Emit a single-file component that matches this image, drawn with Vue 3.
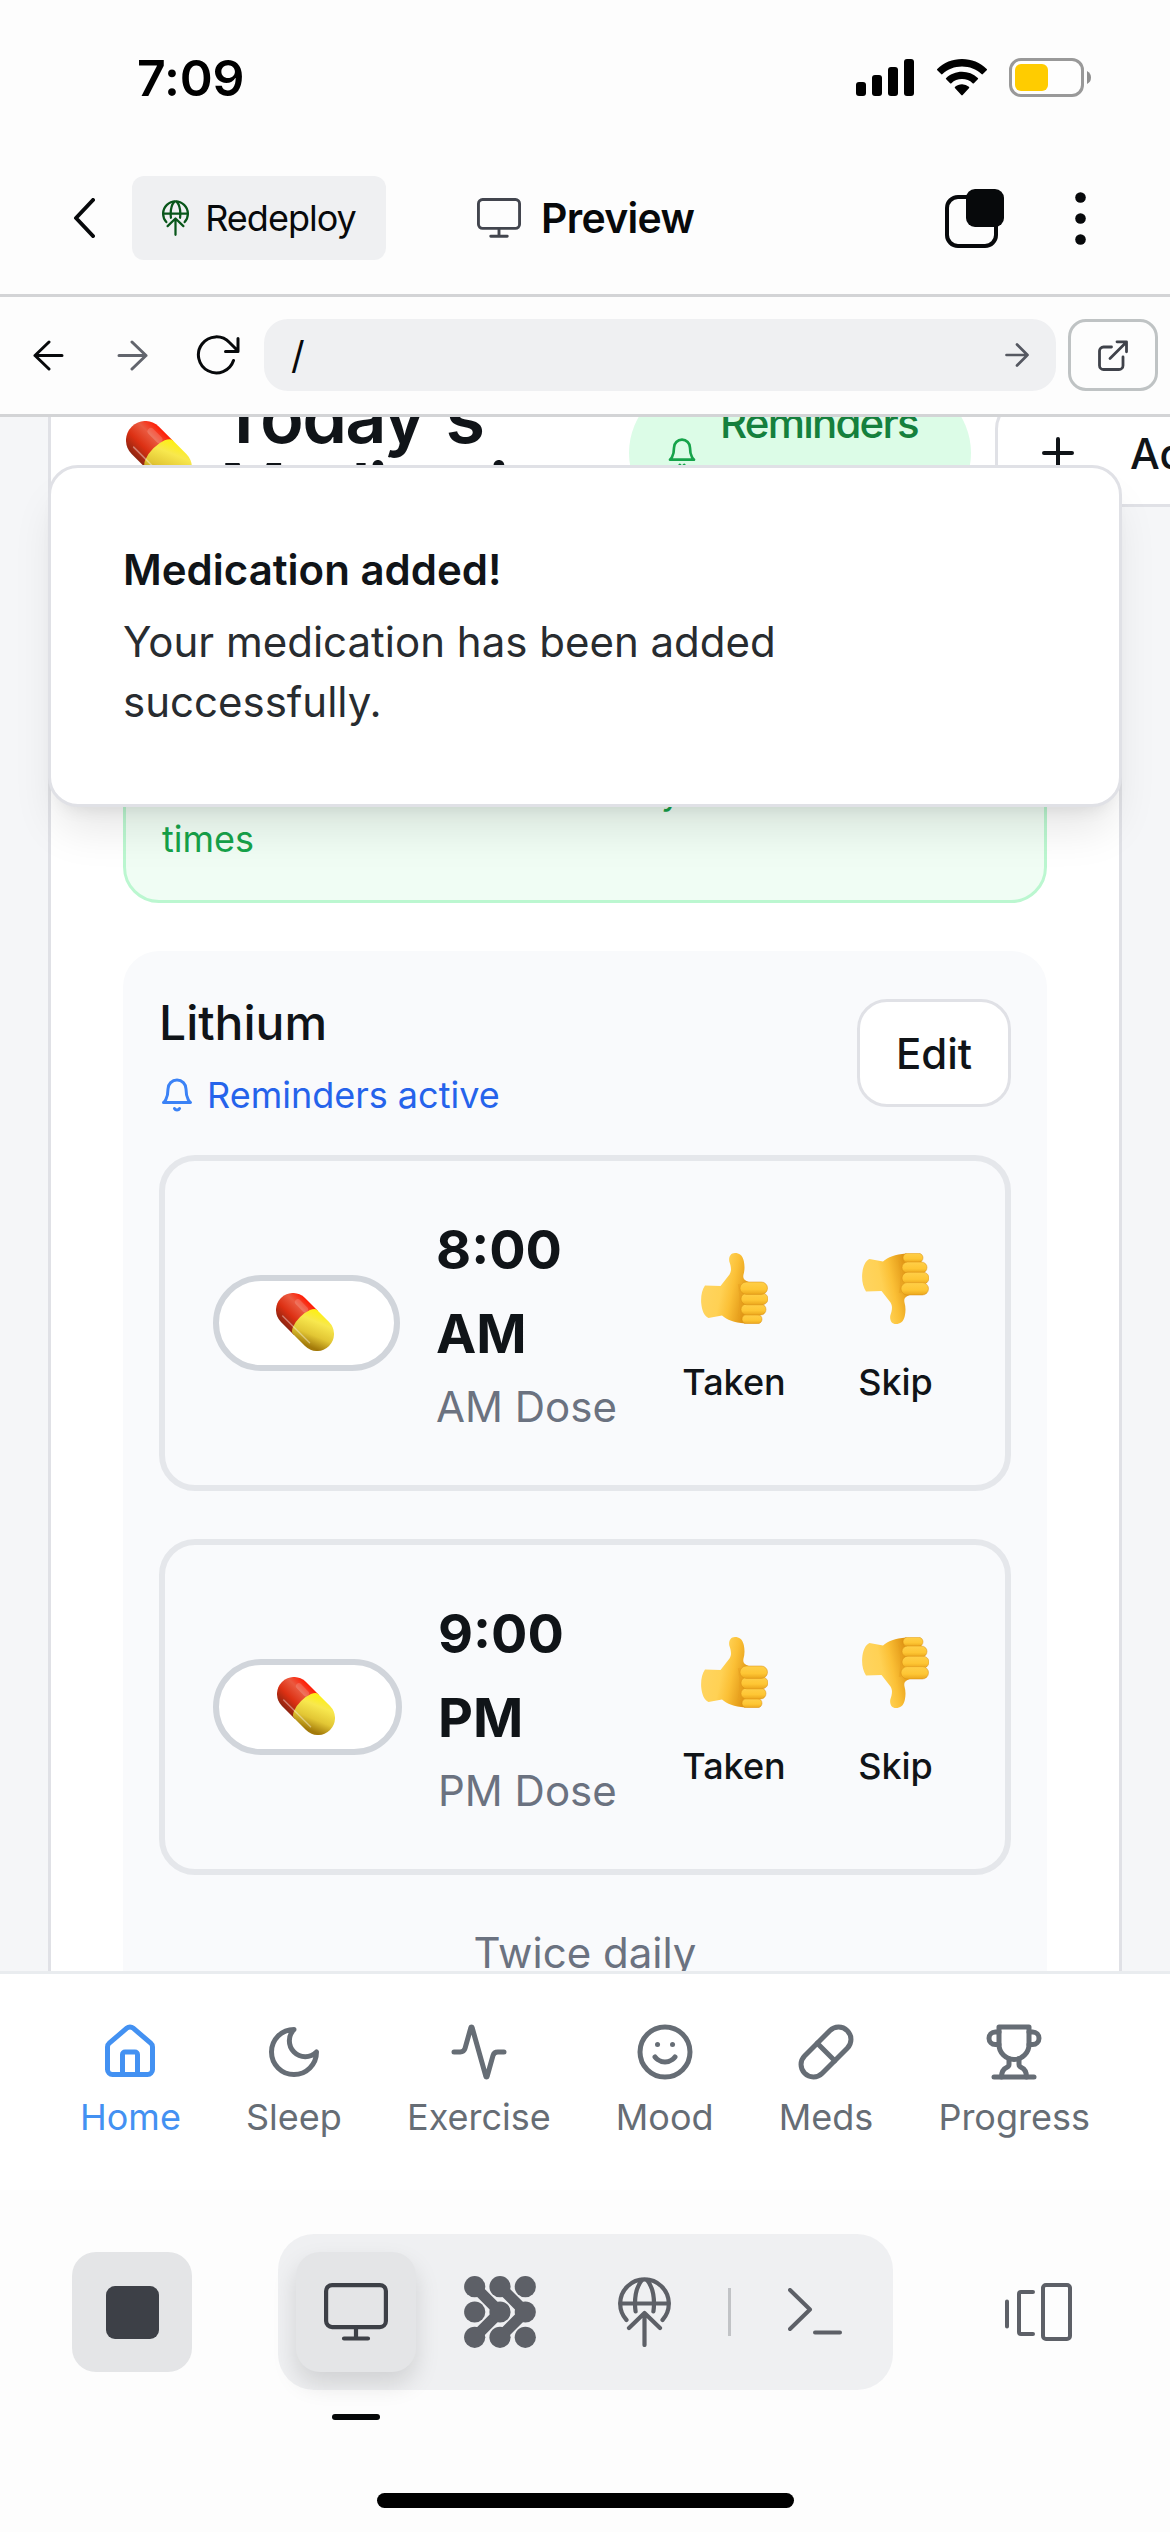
<script setup>
import { h } from 'vue'

const doses = [
  { time: '8:00', half: 'AM', label: 'AM Dose', pillWidth: 187 },
  { time: '9:00', half: 'PM', label: 'PM Dose', pillWidth: 189 }
]

const tabs = [
  {
    name: 'Home',
    active: true,
    paths: [
      'M15 21v-8a1 1 0 0 0-1-1h-4a1 1 0 0 0-1 1v8',
      'M3 10a2 2 0 0 1 .709-1.528l7-5.999a2 2 0 0 1 2.582 0l7 5.999A2 2 0 0 1 21 10v9a2 2 0 0 1-2 2H5a2 2 0 0 1-2-2z'
    ]
  },
  { name: 'Sleep', paths: ['M12 3a6 6 0 0 0 9 9 9 9 0 1 1-9-9Z'] },
  {
    name: 'Exercise',
    paths: [
      'M22 12h-2.48a2 2 0 0 0-1.93 1.46l-2.35 8.36a.25.25 0 0 1-.48 0L9.24 2.18a.25.25 0 0 0-.48 0l-2.35 8.36A2 2 0 0 1 4.49 12H2'
    ]
  },
  {
    name: 'Mood',
    paths: ['M12 2a10 10 0 1 0 0 20 10 10 0 1 0 0-20Z', 'M8 14s1.5 2 4 2 4-2 4-2', 'M9 9h.01', 'M15 9h.01']
  },
  {
    name: 'Meds',
    paths: ['m10.5 20.5 10-10a4.95 4.95 0 1 0-7-7l-10 10a4.95 4.95 0 1 0 7 7Z', 'm8.5 8.5 7 7']
  },
  {
    name: 'Progress',
    paths: [
      'M6 9H4.5a2.5 2.5 0 0 1 0-5H6',
      'M18 9h1.5a2.5 2.5 0 0 0 0-5H18',
      'M4 22h16',
      'M10 14.66V17c0 .55-.47.98-.97 1.21C7.85 18.75 7 20.24 7 22',
      'M14 14.66V17c0 .55.47.98.97 1.21C16.15 18.75 17 20.24 17 22',
      'M18 2H6v7a6 6 0 0 0 12 0V2Z'
    ]
  }
]

const Bell = () =>
  h('svg', { viewBox: '0 0 24 24', fill: 'none', stroke: 'currentColor', 'stroke-width': 2, 'stroke-linecap': 'round', 'stroke-linejoin': 'round' }, [
    h('path', { d: 'M6 8a6 6 0 0 1 12 0c0 7 3 9 3 9H3s3-2 3-9' }),
    h('path', { d: 'M10.3 21a1.94 1.94 0 0 0 3.4 0' })
  ])

const Globe = (props) =>
  h('svg', { viewBox: '0 0 53 70', fill: 'none', stroke: 'currentColor', 'stroke-width': props.weight, 'stroke-linecap': 'round', 'stroke-linejoin': 'round' }, [
    h('path', { d: 'M8.5 43A24.3 24.3 0 1 1 44.5 43' }),
    h('path', { d: 'M2.5 26.5h48M24 3C19 9 17 17 17 26.5q0 4 .6 8M29 3c5 6 7 14 7 23.5q0 4-.6 8' }),
    h('path', { d: 'M11 51 26.5 36 42 51M26.5 37v31' })
  ])
Globe.props = ['weight']

const Monitor = () =>
  h('svg', { viewBox: '0 0 64 58', fill: 'none', stroke: 'currentColor', 'stroke-width': 4.2, 'stroke-linecap': 'round' }, [
    h('rect', { x: 2.1, y: 2.1, width: 59.8, height: 42, rx: 6 }),
    h('path', { d: 'M32 45v10M20 55.5h24' })
  ])

const Capsule = () =>
  h('svg', { viewBox: '0 0 58 58' }, [
    h('g', { transform: 'rotate(45 29 29)' }, [
      h('path', { d: 'M30 12H12a17 17 0 0 0 0 34h18Z', fill: 'url(#capRed)' }),
      h('path', { d: 'M29 12h17a17 17 0 0 1 0 34H29a7 17 0 0 1 0-34Z', fill: 'url(#capYellow)' }),
      h('path', { d: 'M9 40.5h38', stroke: '#fff', 'stroke-opacity': 0.4, 'stroke-width': 1.4, 'stroke-linecap': 'round', fill: 'none' }),
      h('path', { d: 'M10 20h10', stroke: '#fff', 'stroke-opacity': 0.16, 'stroke-width': 6, 'stroke-linecap': 'round', fill: 'none' })
    ])
  ])

const Thumb = (props) =>
  h('svg', { viewBox: '0 0 67 71' }, [
    h('g', { transform: props.down ? 'translate(0 71) scale(1 -1)' : undefined }, [
      h('path', {
        d: 'M4 32.5C1 37-.3 43 .2 50 .8 57 3 63 7.500 65L21 62.500C26 67 33 69.500 44 70.500L50 58V30L45.500 28C42.500 26.500 42 25 42.400 22 43.800 17 43.800 13 42.800 8 41.500 2 38 0 34 0 29.500 0 27.500 4 28.300 8.500 30.500 15 30.500 18 28.500 21.500L19.500 33Z',
        fill: 'url(#handBase)'
      }),
      h('path', { d: 'M38 31q3 17 0 32', stroke: '#e8a020', 'stroke-width': 2.4, 'stroke-opacity': 0.5, fill: 'none' }),
      ...[
        [41, 61.5, 20, 9.3],
        [40, 51, 25, 11],
        [40, 40, 27, 11.8],
        [39, 29, 27.5, 12.4]
      ].map(([x, y, width, height]) =>
        h('rect', { x, y, width, height, rx: height / 2, fill: props.down ? 'url(#fingerDown)' : 'url(#finger)', stroke: '#d88d12', 'stroke-width': 0.7, 'stroke-opacity': 0.7 })
      )
    ])
  ])
Thumb.props = { down: Boolean }
</script>

<template>
  <div class="screen">
    <svg class="defs" width="0" height="0">
      <defs>
        <linearGradient id="capRed" x1="0" y1="0" x2="0" y2="1">
          <stop offset="0" stop-color="#ff1c05" />
          <stop offset=".3" stop-color="#ea5a40" />
          <stop offset=".65" stop-color="#dc3013" />
          <stop offset="1" stop-color="#8e2410" />
        </linearGradient>
        <linearGradient id="capYellow" x1="0" y1="0" x2=".5" y2="1">
          <stop offset="0" stop-color="#fff200" />
          <stop offset=".35" stop-color="#f8e84e" />
          <stop offset=".7" stop-color="#e2c634" />
          <stop offset="1" stop-color="#a37a0a" />
        </linearGradient>
        <linearGradient id="handBase" x1="0" y1=".35" x2="1" y2=".65">
          <stop offset="0" stop-color="#ffd562" />
          <stop offset=".42" stop-color="#ffd154" />
          <stop offset=".62" stop-color="#fbc036" />
          <stop offset="1" stop-color="#d98a0c" />
        </linearGradient>
        <linearGradient id="finger" x1="0" y1="0" x2="0" y2="1">
          <stop offset="0" stop-color="#ffcf48" />
          <stop offset=".6" stop-color="#fec634" />
          <stop offset="1" stop-color="#eba61d" />
        </linearGradient>
        <linearGradient id="fingerDown" x1="0" y1="1" x2="0" y2="0">
          <stop offset="0" stop-color="#ffcf48" />
          <stop offset=".6" stop-color="#fec634" />
          <stop offset="1" stop-color="#eba61d" />
        </linearGradient>
      </defs>
    </svg>

    <header class="status">
      <span class="clock">7:09</span>
      <div class="status-icons">
        <svg class="signal" viewBox="0 0 58 37">
          <rect x="0" y="23" width="10" height="14" rx="3" />
          <rect x="16" y="16" width="10" height="21" rx="3" />
          <rect x="32" y="8" width="10" height="29" rx="3" />
          <rect x="48" y="0" width="10" height="37" rx="3" />
        </svg>
        <svg class="wifi" viewBox="0 0 50 37">
          <path d="M25 0C15.500 0 6.600 3.700.3 9.900a.9.9 0 0 0 0 1.300l3.800 3.900a1 1 0 0 0 1.400 0C10.700 10.200 17.600 7.500 25 7.500s14.300 2.700 19.500 7.600a1 1 0 0 0 1.400 0l3.800-3.900a.9.9 0 0 0 0-1.300C43.400 3.700 34.500 0 25 0Z" />
          <path d="M25 12.700c-6 0-11.600 2.300-15.800 6.200a.9.9 0 0 0 0 1.400l3.900 3.900a1 1 0 0 0 1.300 0c2.800-2.600 6.500-4.100 10.600-4.100s7.800 1.500 10.600 4.100a1 1 0 0 0 1.300 0l3.900-3.900a.9.9 0 0 0 0-1.400A23.200 23.200 0 0 0 25 12.700Z" />
          <path d="M25 25.300c-2.600 0-5 .9-6.900 2.500a.9.9 0 0 0 0 1.400l6.200 6.900a1 1 0 0 0 1.400 0l6.200-6.900a.9.9 0 0 0 0-1.400 10.600 10.600 0 0 0-6.900-2.500Z" />
        </svg>
        <svg class="battery" viewBox="0 0 82 39">
          <rect x="1.5" y="1.500" width="72" height="36" rx="10.500" fill="#fefefe" stroke="#999" stroke-width="3" />
          <rect x="6" y="6" width="33" height="27" rx="6" fill="#ffcc00" />
          <path d="M78 13v13q4-2 4-6.500T78 13Z" fill="#8f8f8f" />
        </svg>
      </div>
    </header>

    <div class="toolbar">
      <svg class="back" viewBox="0 0 22 40"><path d="M20 2 3 20l17 18" /></svg>
      <button class="redeploy"><Globe class="redeploy-icon" :weight="4.4" />Redeploy</button>
      <div class="title"><Monitor class="title-icon" />Preview</div>
      <svg class="tabs-icon" viewBox="0 0 59 59">
        <rect x="2" y="8" width="49" height="49" rx="11" fill="none" stroke="#07090b" stroke-width="4" />
        <rect x="21" y="0" width="38" height="38" rx="9" fill="#07090b" />
      </svg>
      <svg class="dots" viewBox="0 0 11 53">
        <circle cx="5.500" cy="5.500" r="5.300" /><circle cx="5.500" cy="26.500" r="5.300" /><circle cx="5.500" cy="47.500" r="5.300" />
      </svg>
    </div>

    <div class="browser">
      <svg class="nav-arrow" viewBox="0 0 31 31"><path d="M29 15.500H2M16 2 2 15.500 16 29" /></svg>
      <svg class="nav-arrow forward" viewBox="0 0 31 31"><path d="M2 15.500h27M15 2l14 13.500L15 29" /></svg>
      <svg class="reload" viewBox="0 0 44 40">
        <path d="M37.500 25.500A18 18 0 1 1 33.500 7.500L42 16M42 3.500V16.500H29.500" />
      </svg>
      <div class="address">
        <span>/</span>
        <svg viewBox="0 0 24 24"><path d="M1.500 12h21M12 1.500 22.500 12 12 22.500" /></svg>
      </div>
      <button class="open">
        <svg viewBox="0 0 30 31"><path d="M13.500 7H5.500a4 4 0 0 0-4 4v14.500a4 4 0 0 0 4 4H21a4 4 0 0 0 4-4V17M12 18.500 28 2.500M19 1.800h9.500v10" /></svg>
      </button>
    </div>

    <main class="page">
      <section class="card">
        <div class="card-head">
          <Capsule class="head-pill" />
          <h2>Today's Medications</h2>
          <div class="badge"><Bell class="badge-bell" /><span>Reminders<br />Active</span></div>
          <button class="add">
            <svg viewBox="0 0 24 24"><path d="M5 12h14M12 5v14" /></svg>
            Add
          </button>
        </div>

        <div class="notice">
          <p>You'll receive notifications at your scheduled<br />times</p>
        </div>

        <div class="med">
          <div class="med-head">
            <div>
              <h3>Lithium</h3>
              <p class="reminder"><Bell class="reminder-bell" />Reminders active</p>
            </div>
            <button class="edit">Edit</button>
          </div>

          <div v-for="dose in doses" :key="dose.half" class="dose">
            <div class="pill" :style="{ width: dose.pillWidth + 'px' }"><Capsule class="pill-icon" /></div>
            <div class="when">
              <strong>{{ dose.time }}<br />{{ dose.half }}</strong>
              <span>{{ dose.label }}</span>
            </div>
            <button class="choice taken"><Thumb class="thumb" />Taken</button>
            <button class="choice skip"><Thumb class="thumb" down />Skip</button>
          </div>

          <p class="frequency">Twice daily</p>
        </div>
      </section>

      <div class="toast">
        <strong>Medication added!</strong>
        <p>Your medication has been added<br />successfully.</p>
      </div>
    </main>

    <nav class="tabbar">
      <a v-for="tab in tabs" :key="tab.name" class="tab" :class="{ active: tab.active }">
        <svg viewBox="0 0 24 24"><path v-for="d in tab.paths" :key="d" :d="d" /></svg>
        {{ tab.name }}
      </a>
    </nav>

    <footer class="dock">
      <div class="dock-row">
        <button class="stop"><span></span></button>
        <div class="tools">
          <button class="tool current"><Monitor class="tool-monitor" /></button>
          <button class="tool">
            <svg class="tool-grid" viewBox="0 0 72 72">
              <path
                d="M10.700 10.700 36 36 10.700 61.300M36 10.700 61.300 36 36 61.300"
                fill="none"
                stroke="currentColor"
                stroke-width="11"
              />
              <g fill="currentColor">
                <circle v-for="n in 9" :key="n" :cx="10.7 + ((n - 1) % 3) * 25.3" :cy="10.7 + Math.floor((n - 1) / 3) * 25.3" r="10.600" />
              </g>
            </svg>
          </button>
          <button class="tool"><Globe class="tool-globe" :weight="4.2" /></button>
          <i class="divider"></i>
          <button class="tool">
            <svg class="tool-term" viewBox="0 0 54 48"><path d="M2 2 22 21.500 2 41M27 44.500h25" /></svg>
          </button>
        </div>
        <svg class="panels" viewBox="0 0 67 58">
          <path d="M2 18.500v25M28 9H16a2 2 0 0 0-2 2v38a2 2 0 0 0 2 2h12" />
          <rect x="38" y="2" width="27" height="54" rx="3" />
        </svg>
      </div>
      <div class="marker"></div>
      <div class="home-bar"></div>
    </footer>
  </div>
</template>

<style>
body {
  background: #fdfdfd;
}
</style>

<style scoped>
* {
  box-sizing: border-box;
}
.screen {
  width: 1170px;
  height: 2532px;
  overflow: hidden;
  display: flex;
  flex-direction: column;
  background: #fdfdfd;
  color: #101418;
  font-family: Inter, 'Liberation Sans', sans-serif;
}
svg {
  display: block;
  flex: none;
}
.defs {
  position: absolute;
}
button {
  border: 0;
  padding: 0;
  background: none;
  color: inherit;
  font: inherit;
  display: flex;
  align-items: center;
  justify-content: center;
  flex: none;
}
p,
h2,
h3 {
  margin: 0;
}

.status {
  height: 156px;
  flex: none;
  display: flex;
  justify-content: space-between;
  padding: 48px 79px 0 137px;
  color: #000;
}
.clock {
  font-size: 50px;
  line-height: 60px;
  font-weight: 600;
  letter-spacing: -0.2px;
}
.status-icons {
  height: 59px;
  display: flex;
  align-items: center;
}
.signal {
  width: 58px;
  height: 37px;
}
.wifi {
  width: 50px;
  height: 37px;
  margin-left: 23px;
}
.battery {
  width: 82px;
  height: 39px;
  margin-left: 22px;
}

.toolbar {
  height: 141px;
  flex: none;
  display: flex;
  align-items: center;
  padding: 0 84px 14px 73px;
  border-bottom: 3px solid #d3d4d6;
  color: #07090b;
}
.back {
  width: 22px;
  height: 40px;
  fill: none;
  stroke: #07090b;
  stroke-width: 4;
  stroke-linecap: round;
  stroke-linejoin: round;
}
.redeploy {
  width: 254px;
  height: 84px;
  margin-left: 37px;
  border-radius: 12px;
  background: #eff0f2;
  font-size: 36px;
  letter-spacing: -1px;
  gap: 16px;
}
.redeploy-icon {
  width: 27px;
  height: 36px;
  color: #08561a;
}
.title {
  display: flex;
  align-items: center;
  gap: 20px;
  margin-left: 91px;
  width: 468px;
  font-size: 41px;
  font-weight: 600;
  letter-spacing: -0.7px;
}
.title-icon {
  width: 44px;
  height: 40px;
  color: #42454e;
}
.tabs-icon {
  width: 59px;
  height: 59px;
}
.dots {
  width: 11px;
  height: 53px;
  margin-left: auto;
  fill: #07090b;
}

.browser {
  height: 120px;
  flex: none;
  display: flex;
  align-items: center;
  padding: 0 12px 1px 33px;
  border-bottom: 3px solid #d3d4d6;
}
.browser svg {
  fill: none;
  stroke: #07090b;
  stroke-width: 3;
  stroke-linecap: round;
  stroke-linejoin: round;
}
.nav-arrow {
  width: 31px;
  height: 31px;
}
.browser .forward {
  margin-left: 53px;
  stroke: #62656d;
}
.browser .reload {
  width: 44px;
  height: 40px;
  margin-left: 48px;
}
.address {
  width: 792px;
  height: 72px;
  margin-left: 24px;
  padding: 0 27px;
  border-radius: 24px;
  background: #eff0f2;
  display: flex;
  align-items: center;
  justify-content: space-between;
  color: #07090b;
  font-size: 38px;
}
.address svg {
  width: 24px;
  height: 24px;
  stroke: #555861;
  stroke-width: 2.7;
}
.open {
  width: 90px;
  height: 72px;
  margin-left: 12px;
  border: 3px solid #bfc3c4;
  border-radius: 18px;
}
.open svg {
  width: 30px;
  height: 31px;
  stroke: #3f424a;
  stroke-width: 2.8;
}

.page {
  position: relative;
  height: 1554px;
  flex: none;
  overflow: hidden;
  background: #f5f6f8;
}
.card {
  width: 1074px;
  margin: -36px 48px 0;
  padding: 0 72px;
  height: 1700px;
  border: solid #e0e1e6;
  border-width: 0 3px;
  background: #fff;
}
.card-head {
  display: flex;
  align-items: center;
  height: 144px;
  width: 1200px;
}
.head-pill {
  width: 66px;
  height: 66px;
  margin: 2px 0 0 3px;
}
.card-head h2 {
  width: 409px;
  margin-left: 28px;
  padding-right: 10px;
  font-size: 72px;
  line-height: 72px;
  font-weight: 600;
  letter-spacing: -1.8px;
}
.badge {
  width: 342px;
  height: 144px;
  padding-left: 37px;
  display: flex;
  align-items: center;
  gap: 22px;
  border-radius: 72px;
  background: #dcfce7;
  color: #15803d;
  font-size: 42px;
  line-height: 60px;
  font-weight: 500;
  letter-spacing: -1.8px;
}
.badge-bell {
  width: 32px;
  height: 32px;
  color: #16a34a;
}
.add {
  position: relative;
  height: 108px;
  width: 300px;
  margin-left: 24px;
  padding-left: 36px;
  justify-content: flex-start;
  gap: 48px;
  border: 3px solid #e0e1e6;
  border-radius: 30px;
  background: #fff;
  font-size: 42px;
  font-weight: 500;
}
.add svg {
  width: 48px;
  height: 48px;
  stroke: #101418;
  stroke-width: 2;
  stroke-linecap: round;
}
.notice {
  height: 306px;
  margin-top: 72px;
  padding: 36px 36px 37px;
  display: flex;
  align-items: flex-end;
  border: 3px solid #bbf7d0;
  border-radius: 36px;
  background: #f0fdf4;
  color: #16a34a;
  font-size: 36px;
  line-height: 48px;
}
.med {
  height: 1100px;
  margin-top: 48px;
  padding: 36px;
  border-radius: 36px;
  background: #f9fafc;
}
.med-head {
  height: 132px;
  margin-bottom: 36px;
  display: flex;
  justify-content: space-between;
  align-items: center;
}
h3 {
  font-size: 48px;
  line-height: 72px;
  font-weight: 500;
}
.reminder {
  display: flex;
  align-items: center;
  gap: 12px;
  margin-top: 12px;
  color: #2563eb;
  font-size: 36px;
  line-height: 48px;
}
.reminder-bell {
  width: 36px;
  height: 36px;
  color: #3b82f6;
}
.edit {
  width: 154px;
  height: 108px;
  border: 3px solid #e0e1e6;
  border-radius: 30px;
  background: #fff;
  font-size: 42px;
  font-weight: 500;
}
.dose {
  height: 336px;
  margin-bottom: 48px;
  padding: 0 48px;
  display: flex;
  align-items: center;
  border: 6px solid #e5e7eb;
  border-radius: 36px;
}
.pill {
  height: 96px;
  flex: none;
  display: flex;
  align-items: center;
  justify-content: center;
  padding: 0 3px 2px 0;
  border: 6px solid #d1d5db;
  border-radius: 48px;
  background: #fff;
}
.pill-icon {
  width: 58px;
  height: 58px;
}
.when {
  flex: 1;
  margin: -2px 0 0 36px;
  display: flex;
  flex-direction: column;
  white-space: nowrap;
}
.when strong {
  font-size: 54px;
  line-height: 84px;
  font-weight: 700;
}
.when span {
  margin-top: 1px;
  color: #6b7280;
  font-size: 42px;
  line-height: 60px;
}
.choice {
  flex-direction: column;
  gap: 34px;
  padding-top: 12px;
  font-size: 36px;
  line-height: 48px;
  font-weight: 500;
}
.taken {
  width: 148px;
}
.skip {
  width: 123px;
  margin-left: 26px;
}
.thumb {
  width: 67px;
  height: 71px;
}
.frequency {
  text-align: center;
  color: #6b7280;
  font-size: 42px;
  line-height: 60px;
}
.toast {
  position: absolute;
  top: 48px;
  left: 48px;
  width: 1074px;
  height: 342px;
  padding: 72px;
  border: 3px solid #e0e1e6;
  border-radius: 30px;
  background: #fff;
  box-shadow: 0 30px 45px -9px rgba(0, 0, 0, 0.1), 0 12px 18px -12px rgba(0, 0, 0, 0.1);
  font-size: 42px;
  line-height: 60px;
}
.toast strong {
  font-weight: 600;
}
.toast p {
  margin-top: 12px;
  color: #282c30;
}

.tabbar {
  height: 219px;
  flex: none;
  display: flex;
  justify-content: space-between;
  padding: 48px 80px 0;
  border-top: 3px solid #e9ecef;
  background: #fff;
}
.tab {
  display: flex;
  flex-direction: column;
  align-items: center;
  gap: 11px;
  color: #666d75;
  font-size: 36px;
  line-height: 48px;
}
.tab svg {
  width: 60px;
  height: 60px;
  fill: none;
  stroke: currentColor;
  stroke-width: 2;
  stroke-linecap: round;
  stroke-linejoin: round;
}
.tab.active {
  color: #4391f2;
}

.dock {
  flex: 1;
  padding-top: 44px;
}
.dock-row {
  display: flex;
  align-items: center;
  padding-left: 72px;
}
.stop {
  width: 120px;
  height: 120px;
  border-radius: 24px;
  background: #e4e5e7;
}
.stop span {
  width: 53px;
  height: 53px;
  border-radius: 9px;
  background: #3d4047;
}
.tools {
  width: 615px;
  height: 156px;
  margin-left: 86px;
  padding: 0 18px;
  display: flex;
  align-items: center;
  border-radius: 36px;
  background: #eff0f2;
  color: #5d6067;
}
.tool {
  width: 120px;
  height: 120px;
  border-radius: 24px;
}
.tool + .tool {
  margin-left: 24px;
}
.tool.current {
  background: #e4e5e7;
  color: #3d4047;
  box-shadow: 0 12px 24px rgba(0, 0, 0, 0.13);
}
.tool-monitor {
  width: 64px;
  height: 58px;
}
.tool-grid {
  width: 72px;
  height: 72px;
}
.tool-globe {
  width: 53px;
  height: 70px;
}
.tool-term {
  width: 54px;
  height: 48px;
  fill: none;
  stroke: currentColor;
  stroke-width: 4;
  stroke-linecap: round;
  stroke-linejoin: round;
}
.divider {
  width: 3px;
  height: 48px;
  margin: 0 24px;
  background: #c1c3c6;
}
.panels {
  width: 67px;
  height: 58px;
  margin-left: 112px;
  fill: none;
  stroke: #5d6067;
  stroke-width: 4;
  stroke-linecap: round;
}
.marker {
  width: 48px;
  height: 6px;
  margin: 24px 0 0 332px;
  border-radius: 3px;
  background: #060809;
}
.home-bar {
  width: 417px;
  height: 15px;
  margin: 73px 0 0 377px;
  border-radius: 8px;
  background: #000;
}
</style>
